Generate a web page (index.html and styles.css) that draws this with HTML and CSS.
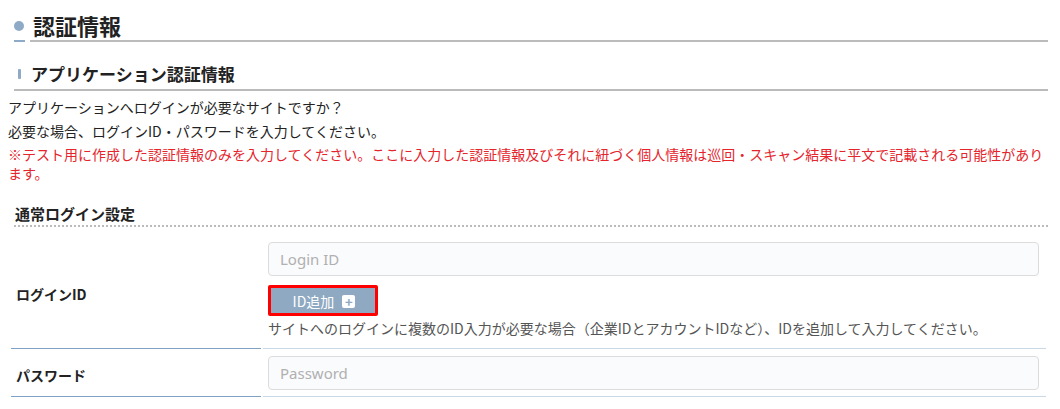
FILE: index.html
```html
<!DOCTYPE html>
<html lang="ja">
<head>
  <meta charset="UTF-8">
  <meta name="viewport" content="width=device-width, initial-scale=1.0">
  <link rel="stylesheet" href="styles.css">
  <title>認証情報</title>
</head>
<body>
  <div class="page">
    <h1 class="title-main">
      <span class="title-mark"><span class="dot"></span></span>
      <span class="title-text">認証情報</span>
    </h1>

    <h2 class="title-sub"><span class="bar"></span>アプリケーション認証情報</h2>

    <div class="intro">
      <p class="line">アプリケーションへログインが必要なサイトですか？</p>
      <p class="line">必要な場合、ログインID・パスワードを入力してください。</p>
      <p class="warn">※テスト用に作成した認証情報のみを入力してください。ここに入力した認証情報及びそれに紐づく個人情報は巡回・スキャン結果に平文で記載される可能性があります。</p>
    </div>

    <h3 class="title-group">通常ログイン設定</h3>

    <table class="form-table">
      <tbody>
        <tr class="row-login">
          <th>ログインID</th>
          <td>
            <input type="text" class="field" placeholder="Login ID">
            <div class="btn-wrap">
              <button class="btn-add">ID追加 <span class="plus">+</span></button>
            </div>
            <p class="help">サイトへのログインに複数のID入力が必要な場合（企業IDとアカウントIDなど）、IDを追加して入力してください。</p>
          </td>
        </tr>
        <tr class="row-pass">
          <th>パスワード</th>
          <td>
            <input type="password" class="field" placeholder="Password">
          </td>
        </tr>
      </tbody>
    </table>
  </div>
</body>
</html>
```

FILE: styles.css
```css
body {
  font-family: "Noto Sans CJK JP", "Noto Sans", sans-serif;
  color: #222;
  background: #fff;
  margin: 0;
  padding: 0;
}

.page {
  padding: 10px 12px 0 8px;
}

p {
  margin: 0;
}

.title-main {
  display: flex;
  align-items: flex-end;
  margin: 0 0 0 6px;
  font-size: 22px;
  line-height: 30px;
}

.title-mark {
  width: 11px;
  height: 30px;
  border-bottom: 2px solid #8eaac6;
  display: flex;
  align-items: center;
}

.dot {
  width: 10px;
  height: 10px;
  border-radius: 50%;
  background: #8eaac6;
  margin-top: 2px;
}

.title-text {
  flex: 1;
  margin-left: 5px;
  padding-left: 3px;
  border-bottom: 2px solid #bbb;
}

.title-sub {
  display: flex;
  align-items: center;
  margin: 20px 0 0 6px;
  padding: 0 0 3px 4px;
  font-size: 17px;
  line-height: 24px;
  border-bottom: 2px solid #bbb;
}

.bar {
  width: 3px;
  height: 10px;
  background: #8eaac6;
  border-radius: 1px;
  margin-right: 10px;
}

.intro {
  margin-top: 4px;
  font-size: 14px;
}

.line {
  line-height: 24px;
}

.warn {
  color: #e5242c;
  line-height: 19px;
  margin-top: 2px;
}

.title-group {
  margin: 20px 0 0 6px;
  padding: 0 0 0 1px;
  font-size: 15px;
  line-height: 22px;
  border-bottom: 2px dotted #bbb;
}

.form-table {
  width: calc(100% - 1px);
  margin-left: 1px;
  border-collapse: separate;
  border-spacing: 2px 0;
}

.form-table th {
  width: 245px;
  text-align: left;
  font-size: 14px;
  padding: 4px 0 0 5px;
  border-bottom: 1px solid #7fa1c3;
}

.form-table td {
  padding: 0 7px 0 5px;
  border-bottom: 1px solid #c9d8e6;
}

.row-login th {
  padding-top: 12px;
}

.row-login td {
  padding-top: 15px;
  padding-bottom: 10px;
}

.row-pass td {
  padding-top: 7px;
  padding-bottom: 6px;
}

.field {
  display: block;
  box-sizing: border-box;
  width: 100%;
  height: 34px;
  padding: 0 11px;
  font-family: "Noto Sans", "Noto Sans CJK JP", sans-serif;
  font-size: 15px;
  background: #fafbfd;
  border: 1px solid #dcdcdc;
  border-radius: 4px;
}

.field::placeholder {
  color: #b0b0b0;
}

.btn-wrap {
  margin-top: 9px;
}

.btn-add {
  box-sizing: border-box;
  height: 31px;
  width: 110px;
  padding: 0 0 0 2px;
  background: #8ea9c1;
  color: #fff;
  font-family: "Noto Sans CJK JP", sans-serif;
  font-size: 14px;
  border: 3px solid #ff0000;
  border-radius: 2px;
  cursor: pointer;
}

.plus {
  display: inline-block;
  width: 13px;
  height: 13px;
  line-height: 13px;
  margin-left: 5px;
  background: #fff;
  color: #8ea9c1;
  font-weight: bold;
  font-size: 13px;
  text-align: center;
  border-radius: 2px;
}

.help {
  margin-top: 2px;
  font-size: 14px;
  color: #555;
  line-height: 20px;
}
```
